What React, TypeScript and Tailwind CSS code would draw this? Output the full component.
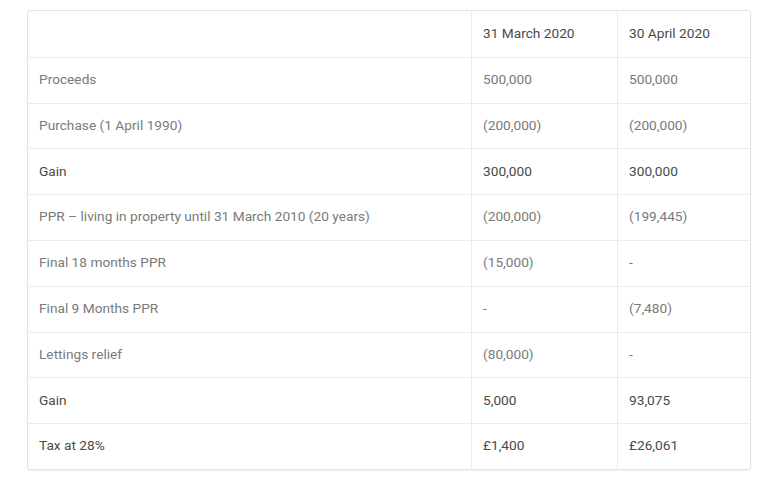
import React from "react";

const rows: { label: string; a: string; b: string; strong?: boolean }[] = [
  { label: "Proceeds", a: "500,000", b: "500,000" },
  { label: "Purchase (1 April 1990)", a: "(200,000)", b: "(200,000)" },
  { label: "Gain", a: "300,000", b: "300,000", strong: true },
  { label: "PPR – living in property until 31 March 2010 (20 years)", a: "(200,000)", b: "(199,445)" },
  { label: "Final 18 months PPR", a: "(15,000)", b: "-" },
  { label: "Final 9 Months PPR", a: "-", b: "(7,480)" },
  { label: "Lettings relief", a: "(80,000)", b: "-" },
  { label: "Gain", a: "5,000", b: "93,075", strong: true },
  { label: "Tax at 28%", a: "£1,400", b: "£26,061", strong: true },
];

export default function App() {
  return (
    <div
      className="w-[771px] h-[487px] bg-white pt-[10px] pl-[27px]"
      style={{ fontFamily: "Roboto, 'Noto Sans', sans-serif" }}
    >
      <div className="w-[724px] rounded-[3px] border border-[#e3e3e3] shadow-[0_1px_2px_rgba(0,0,0,0.06)] overflow-hidden">
        <div className="grid grid-cols-[444px_146px_1fr] h-[45.8px] items-stretch text-[13.7px] text-[#4a4a4a]">
          <div className="border-r border-[#ececec]" />
          <div className="border-r border-[#ececec] flex items-center pl-[11px] pb-[2px]">31 March 2020</div>
          <div className="flex items-center pl-[11px] pb-[2px]">30 April 2020</div>
        </div>
        {rows.map((r, i) => (
          <div
            key={i}
            className={`grid grid-cols-[444px_146px_1fr] h-[45.8px] border-t border-[#ececec] text-[13.7px] ${
              r.strong ? "text-[#4a4a4a]" : "text-[#7a7a7a]"
            }`}
          >
            <div className="border-r border-[#ececec] flex items-center pl-[11px] pb-[2px]">{r.label}</div>
            <div className="border-r border-[#ececec] flex items-center pl-[11px] pb-[2px]">{r.a}</div>
            <div className="flex items-center pl-[11px] pb-[2px]">{r.b}</div>
          </div>
        ))}
      </div>
    </div>
  );
}
